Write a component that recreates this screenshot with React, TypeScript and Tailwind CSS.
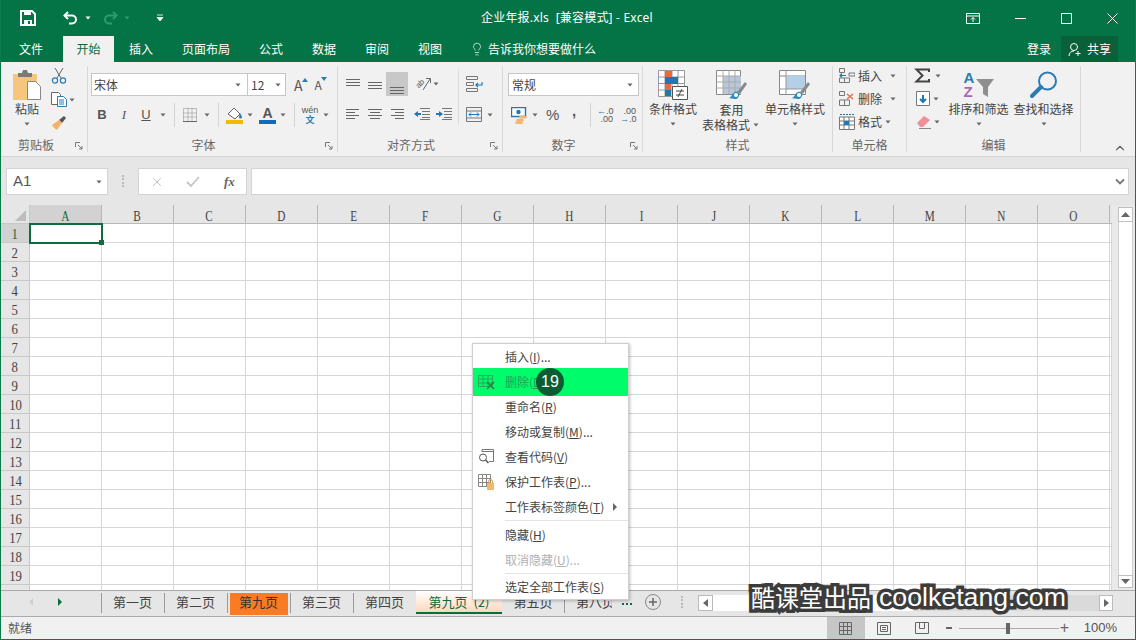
import { ChevronUp, Lightbulb, X } from 'lucide-react'
import type { ReactNode } from 'react'

const COLS = ['A', 'B', 'C', 'D', 'E', 'F', 'G', 'H', 'I', 'J', 'K', 'L', 'M', 'N', 'O']
const ROWS = Array.from({ length: 20 }, (_, i) => i + 1)

function Caret({ className = '', color = '#666' }: { className?: string; color?: string }) {
  return (
    <svg width="10" height="6" viewBox="0 0 10 6" className={`shrink-0 ${className}`}>
      <path d="M2.5 1.5h5L5 4.5z" fill={color} />
    </svg>
  )
}

function Launcher() {
  return (
    <svg width="8" height="8" viewBox="0 0 8 8" className="absolute right-[4px] bottom-[2px]">
      <path d="M.5 5V.5H5M3 3l4 4M7 4v3H4" fill="none" stroke="#777" strokeWidth="1" />
    </svg>
  )
}

function Group({ w, label, launcher, children }: { w: string; label: string; launcher?: boolean; children: ReactNode }) {
  return (
    <div className={`${w} relative shrink-0 my-[4px] border-r border-[#d8d8d8] flex flex-col`}>
      <div className="h-[71px] relative">{children}</div>
      <div className={`h-[15px] flex items-center justify-center text-[12px] text-[#666] ${launcher ? 'pr-[18px]' : ''}`}>{label}</div>
      {launcher && <Launcher />}
    </div>
  )
}

function Sep() {
  return <div className="w-px h-[24px] bg-[#d4d4d4] shrink-0" />
}

function Lines({ ys, x1s, x2s, color = '#666' }: { ys: number[]; x1s: number[]; x2s: number[]; color?: string }) {
  return (
    <svg width="16" height="14" viewBox="0 0 16 14">
      {ys.map((y, i) => (
        <path key={y} d={`M${x1s[i]} ${y + 0.5}H${x2s[i]}`} stroke={color} strokeWidth="1" />
      ))}
    </svg>
  )
}

function Big({ w, icon, text, caret = true }: { w: string; icon: ReactNode; text: ReactNode; caret?: boolean }) {
  return (
    <div className={`${w} flex flex-col items-center pt-[4px] shrink-0`}>
      <div className="h-[30px] flex items-center justify-center">{icon}</div>
      <div className="mt-[1px] text-[12px] leading-[15px] text-[#444] whitespace-nowrap">{text}</div>
      {caret && <Caret className="mt-[5px]" />}
    </div>
  )
}

function BrushOverlay() {
  return (
    <g>
      <path d="M20 29c-4 0-7-1-7-1 3-1 3-5 6-6 3-1 5 2 4 4-1 2-2 3-3 3z" fill="#2e8bc0" />
      <path d="M21 22l8-10 2 2-7 10z" fill="#8a8a8a" />
      <circle cx="20" cy="25" r="2" fill="#fff" />
    </g>
  )
}

function MenuItem({ label, accel, suffix = '', icon, disabled, arrow }: { label: string; accel: string; suffix?: string; icon?: ReactNode; disabled?: boolean; arrow?: boolean }) {
  return (
    <div className={`h-[25px] flex items-center text-[12px] ${disabled ? 'text-[#b0b0b0]' : 'text-[#444]'}`}>
      <div className="w-[32px] shrink-0 flex justify-start pl-[5px]">{icon}</div>
      <span>
        {label}(<span className="underline">{accel}</span>){suffix}
      </span>
      {arrow && (
        <svg width="6" height="8" viewBox="0 0 6 8" className="ml-[8px]">
          <path d="M1 0l4 4-4 4z" fill="#666" />
        </svg>
      )}
    </div>
  )
}

function Tab({ children, sep = true, className = 'w-[63px] justify-center' }: { children: ReactNode; sep?: boolean; className?: string }) {
  return (
    <div className={`h-[23px] mt-px relative shrink-0 flex items-center pb-[3px] whitespace-nowrap text-[13px] text-[#444] ${className}`}>
      {sep && <div className="absolute left-0 top-px w-px h-[20px] bg-[#9a9a9a]" />}
      {children}
    </div>
  )
}

export default function App() {
  return (
    <div className="w-[1136px] h-[640px] relative overflow-hidden flex flex-col bg-[#f1f1f1] border-x border-b border-[#0a7a4a] font-['Noto_Sans_CJK_SC','Noto_Sans',sans-serif]">
      {/* title bar */}
      <div className="h-[36px] -mx-px bg-[#047346] flex items-center text-white shrink-0">
        <div className="w-[481px] flex items-center shrink-0">
          <svg width="16" height="16" viewBox="0 0 16 16" className="ml-[20px]">
            <path d="M1 1h11l3 3v11H1z" fill="none" stroke="#fff" strokeWidth="2" />
            <path d="M4 1h7v4H4zM4 10h8v5H4z" fill="#fff" />
            <path d="M8 11h2v3H8z" fill="#047346" />
          </svg>
          <svg width="16" height="14" viewBox="0 0 16 14" className="ml-[27px]">
            <path d="M5 1L1.5 4.5 5 8" fill="none" stroke="#fff" strokeWidth="2" />
            <path d="M2 4.5h7a4 4 0 0 1 0 8H6" fill="none" stroke="#fff" strokeWidth="2" />
          </svg>
          <Caret className="ml-[4px]" color="#fff" />
          <svg width="16" height="14" viewBox="0 0 16 14" className="ml-[9px]">
            <path d="M11 1l3.500 3.500L11 8" fill="none" stroke="#2f9a70" strokeWidth="2" />
            <path d="M14 4.500H7a4 4 0 0 0 0 8h3" fill="none" stroke="#2f9a70" strokeWidth="2" />
          </svg>
          <Caret className="ml-[4px]" color="#2f9a70" />
          <svg width="8" height="8" viewBox="0 0 8 8" className="ml-[24px]">
            <path d="M1 1h6M1 3.500h6L4 7z" fill="#fff" stroke="#fff" strokeWidth=".8" />
          </svg>
        </div>
        <div className="text-[12px] tracking-[.2px] whitespace-pre font-['Noto_Sans','Noto_Sans_CJK_SC',sans-serif]">企业年报.xls  [兼容模式] - Excel</div>
        <div className="flex-1 flex items-center justify-end pr-[18px]">
          <svg width="14" height="11" viewBox="0 0 14 11">
            <path d="M.5 .5h13v10H.5zM.5 3h13" fill="none" stroke="#fff" />
            <path d="M7 9V4.500M5 6.500l2-2 2 2" fill="none" stroke="#fff" />
          </svg>
          <svg width="11" height="11" viewBox="0 0 11 11" className="ml-[35px]">
            <path d="M0 5.500h11" stroke="#fff" />
          </svg>
          <svg width="11" height="11" viewBox="0 0 11 11" className="ml-[35px]">
            <path d="M.5 .5h10v10H.5z" fill="none" stroke="#fff" />
          </svg>
          <svg width="11" height="11" viewBox="0 0 11 11" className="ml-[35px]">
            <path d="M.5 .5l10 10M10.500 .5l-10 10" fill="none" stroke="#fff" />
          </svg>
        </div>
      </div>

      {/* tabs */}
      <div className="h-[26px] -mx-px bg-[#047346] flex items-center text-[12px] text-white shrink-0">
        <span className="ml-[19px]">文件</span>
        <div className="ml-[20px] w-[51px] h-full bg-[#f1f1f1] text-[#0b6b3f] flex items-center justify-center">开始</div>
        <span className="ml-[15px]">插入</span>
        <span className="ml-[29px]">页面布局</span>
        <span className="ml-[29px]">公式</span>
        <span className="ml-[29px]">数据</span>
        <span className="ml-[29px]">审阅</span>
        <span className="ml-[29px]">视图</span>
        <Lightbulb size={14} strokeWidth={1.2} className="ml-[28px]" />
        <span className="ml-[4px]">告诉我你想要做什么</span>
        <div className="flex-1" />
        <span>登录</span>
        <div className="ml-[10px] mr-[18px] w-[57px] h-full bg-[#0a6038] flex items-center justify-center gap-[4px]">
          <svg width="15" height="15" viewBox="0 0 15 15">
            <circle cx="6" cy="5" r="3.500" fill="none" stroke="#fff" />
            <path d="M1 14c0-3 2-5 5-5M10 9v5M7.500 11.500h5" fill="none" stroke="#fff" />
          </svg>
          <span>共享</span>
        </div>
      </div>

      {/* ribbon */}
      <div className="h-[95px] flex shrink-0 border-b border-[#d4d4d4] pl-[2px] text-[#444]">
        <Group w="w-[85px]" label="剪贴板" launcher>
          <div className="flex h-full">
            <div className="w-[48px] flex flex-col items-center pt-[4px]">
              <svg width="28" height="30" viewBox="0 0 28 30">
                <path d="M0 4h24v26H0z" fill="#f6c67e" />
                <path d="M5 3h4l1-3h4l1 3h4v4H5z" fill="#7a7a7a" />
                <path d="M14.500 11.500h8l5 5v13h-13z" fill="#fff" stroke="#888" />
              </svg>
              <div className="text-[12px] leading-[15px] mt-[1px]">粘贴</div>
              <Caret className="mt-[5px]" />
            </div>
            <div className="flex flex-col pt-[2px]">
              <svg width="16" height="16" viewBox="0 0 16 16">
                <path d="M4 0l6 10M12 0L6 10" stroke="#666" fill="none" />
                <circle cx="4" cy="12.500" r="2.600" fill="none" stroke="#2b7cb3" strokeWidth="1.200" />
                <circle cx="12" cy="12.500" r="2.600" fill="none" stroke="#2b7cb3" strokeWidth="1.200" />
              </svg>
              <div className="flex items-center mt-[8px]">
                <svg width="16" height="15" viewBox="0 0 16 15">
                  <path d="M.5 .5h7l2 2v10h-9z" fill="#fff" stroke="#666" />
                  <path d="M6.500 4.500h6l3 3v7h-9z" fill="#fff" stroke="#2b7cb3" />
                  <path d="M8 8h5M8 10h5M8 12h5" stroke="#2b7cb3" />
                </svg>
                <Caret />
              </div>
              <svg width="16" height="15" viewBox="0 0 16 15" className="mt-[8px]">
                <path d="M8 5l5-4 2 2-4 5z" fill="#555" />
                <path d="M1 10l7-5 3 3-5 7c-2-1-4-3-5-5z" fill="#f4b26a" />
              </svg>
            </div>
          </div>
        </Group>

        <Group w="w-[250px]" label="字体" launcher>
          <div className="flex items-center ml-[3px] mt-[7px]">
            <div className="w-[157px] h-[23px] bg-white border border-[#c6c6c6] flex items-center justify-between text-[12px] pl-[2px] pr-[4px]">
              宋体
              <Caret />
            </div>
            <div className="w-[39px] h-[23px] -ml-px bg-white border border-[#c6c6c6] flex items-center justify-between text-[12px] pl-[3px] pr-[2px]">
              12
              <Caret />
            </div>
            <div className="ml-[8px] text-[14px] leading-none relative text-[#555]">
              A
              <svg width="6" height="4" viewBox="0 0 6 4" className="absolute -right-[5px] top-0">
                <path d="M0 4l3-4 3 4z" fill="#2b7cb3" />
              </svg>
            </div>
            <div className="ml-[12px] text-[12px] leading-none relative text-[#555]">
              A
              <svg width="6" height="4" viewBox="0 0 6 4" className="absolute -right-[5px] -top-[2px]">
                <path d="M0 0l3 4 3-4z" fill="#2b7cb3" />
              </svg>
            </div>
          </div>
          <div className="flex items-center ml-[3px] mt-[9px] h-[20px] text-[13px] text-[#555] font-['Liberation_Sans',sans-serif]">
            <div className="w-[22px] text-center font-bold">B</div>
            <div className="w-[22px] text-center italic font-['Liberation_Serif',serif]">I</div>
            <div className="w-[22px] text-center underline">U</div>
            <Caret className="ml-[1px]" />
            <div className="ml-[6px]"><Sep /></div>
            <svg width="14" height="14" viewBox="0 0 14 14" className="ml-[8px]">
              <path d="M.5 .5h13v13H.5zM.5 5h13M.5 9h13M5 .5v13M9 .5v13" fill="none" stroke="#888" strokeDasharray="1 1" />
              <path d="M0 13.500h14" stroke="#666" />
            </svg>
            <Caret className="ml-[5px]" />
            <div className="ml-[6px]"><Sep /></div>
            <svg width="18" height="17" viewBox="0 0 18 17" className="ml-[7px]">
              <path d="M2 7l6-6 6 6-5 5z" fill="#fff" stroke="#666" />
              <path d="M14 6c1 2 2 3 2 4a1.500 1.500 0 0 1-3 0z" fill="#2b7cb3" />
              <path d="M0 13h17v4H0z" fill="#f5b800" />
            </svg>
            <Caret className="ml-[1px]" />
            <div className="ml-[4px] w-[17px] flex flex-col items-center">
              <span className="text-[14px] leading-[13px] font-bold text-[#555]">A</span>
              <div className="w-[17px] h-[4px] bg-[#0f6cbd]" />
            </div>
            <Caret className="ml-[2px]" />
            <div className="ml-[6px]"><Sep /></div>
            <div className="ml-[6px] w-[18px] flex flex-col items-center text-[9px] leading-[9px] text-[#555]">
              wén
              <span className="text-[#2b7cb3] font-bold font-['Noto_Sans_CJK_SC',sans-serif]">文</span>
            </div>
            <Caret className="ml-[2px]" />
          </div>
        </Group>

        <Group w="w-[165px]" label="对齐方式" launcher>
          <div className="flex h-full">
            <div className="w-[121px] shrink-0 border-r border-[#dcdcdc] h-[56px] mt-[3px]">
              <div className="flex items-center ml-[4px] h-[24px] mt-[3px]">
                <div className="w-[22px] flex justify-center"><Lines ys={[2, 5, 8]} x1s={[1, 1, 1]} x2s={[15, 15, 15]} /></div>
                <div className="w-[22px] flex justify-center"><Lines ys={[5, 8, 11]} x1s={[1, 1, 1]} x2s={[15, 15, 15]} /></div>
                <div className="w-[22px] h-[24px] bg-[#c8c8c8] flex items-end justify-center"><Lines ys={[5, 8, 11]} x1s={[1, 1, 1]} x2s={[15, 15, 15]} /></div>
                <div className="w-[23px] flex items-center justify-end">
                  <span className="inline-block -rotate-45 text-[8px] leading-none text-[#555] font-['Liberation_Sans',sans-serif]">ab</span>
                  <svg width="8" height="14" viewBox="0 0 8 14" className="-ml-[2px]">
                    <path d="M0 13L7 2M3 1.500h4.500V6" fill="none" stroke="#666" />
                  </svg>
                </div>
                <Caret />
              </div>
              <div className="flex items-center ml-[4px] h-[20px] mt-[8px]">
                <div className="w-[22px] flex justify-center"><Lines ys={[2, 5, 8, 11]} x1s={[1, 1, 1, 1]} x2s={[14, 10, 14, 10]} /></div>
                <div className="w-[22px] flex justify-center"><Lines ys={[2, 5, 8, 11]} x1s={[1, 3, 1, 3]} x2s={[15, 13, 15, 13]} /></div>
                <div className="w-[22px] flex justify-center"><Lines ys={[2, 5, 8, 11]} x1s={[2, 6, 2, 6]} x2s={[15, 15, 15, 15]} /></div>
                <div className="ml-[3px] w-[22px] flex justify-center">
                  <svg width="16" height="12" viewBox="0 0 16 12">
                    <path d="M6 .5h10M8 3.500h8M8 6.500h8M8 9.500h8M6 11.500h10" stroke="#777" fill="none" />
                    <path d="M0 6l4-3v2h3v2H4v2z" fill="#1f77b4" />
                  </svg>
                </div>
                <div className="w-[22px] flex justify-center">
                  <svg width="16" height="12" viewBox="0 0 16 12">
                    <path d="M6 .5h10M8 3.500h8M8 6.500h8M8 9.500h8M6 11.500h10" stroke="#777" fill="none" />
                    <path d="M7 6L3 3v2H0v2h3v2z" fill="#1f77b4" />
                  </svg>
                </div>
              </div>
            </div>
            <div className="pl-[7px] pt-[10px]">
              <svg width="17" height="16" viewBox="0 0 17 16">
                <path d="M.5 .5h11v3H.5zM.5 6.500h7v3h-7zM.5 12.500h11v3H.5z" fill="none" stroke="#777" />
                <path d="M16 6v3h-6M12 7l-2 2 2 2" fill="none" stroke="#1f77b4" strokeWidth="1.200" />
              </svg>
              <div className="flex items-center mt-[15px]">
                <svg width="16" height="15" viewBox="0 0 16 15">
                  <path d="M.5 .5h15v14H.5zM.5 4h15M.5 11h15" fill="none" stroke="#777" />
                  <path d="M3 7.500h10M5 5.500l-2 2 2 2M11 5.500l2 2-2 2" fill="none" stroke="#1f77b4" />
                </svg>
                <Caret className="ml-[3px]" />
              </div>
            </div>
          </div>
        </Group>

        <Group w="w-[140px]" label="数字" launcher>
          <div className="ml-[5px] mt-[7px] w-[131px] h-[23px] bg-white border border-[#c6c6c6] flex items-center justify-between text-[12px] pl-[3px] pr-[3px]">
            常规
            <Caret />
          </div>
          <div className="flex items-center ml-[8px] mt-[9px] h-[20px]">
            <svg width="18" height="17" viewBox="0 0 18 17">
              <path d="M.5 .5h14v9H.5z" fill="#fff" stroke="#1f77b4" strokeWidth="1.400" />
              <circle cx="7.500" cy="5" r="2.200" fill="#1f77b4" />
              <ellipse cx="12" cy="10" rx="4" ry="1.600" fill="#f3b766" />
              <ellipse cx="9" cy="13" rx="4" ry="1.600" fill="#f3b766" />
              <ellipse cx="8" cy="15.500" rx="4" ry="1.500" fill="#f3b766" />
            </svg>
            <Caret className="ml-[1px]" />
            <span className="ml-[6px] w-[15px] text-[15px] text-[#555] font-['Liberation_Sans',sans-serif]">%</span>
            <span className="w-[26px] -mt-[8px] text-center text-[15px] font-bold text-[#555] font-['Liberation_Sans',sans-serif]">,</span>
            <div className="ml-[3px]"><Sep /></div>
            <div className="ml-[6px] w-[16px] text-[9px] leading-[8px] text-[#555] font-['Liberation_Sans',sans-serif]">
              <div className="whitespace-nowrap"><span className="text-[#1f77b4] font-bold">←</span>.0</div>
              <div className="text-right">.00</div>
            </div>
            <div className="ml-[7px] w-[16px] text-[9px] leading-[8px] text-[#555] font-['Liberation_Sans',sans-serif]">
              <div className="text-right">.00</div>
              <div className="whitespace-nowrap"><span className="text-[#1f77b4] font-bold">→</span>.0</div>
            </div>
          </div>
        </Group>

        <Group w="w-[190px]" label="样式">
          <div className="flex pl-[3px] h-full">
            <Big
              w="w-[54px]"
              text="条件格式"
              icon={
                <svg width="30" height="30" viewBox="0 0 30 30">
                  <path d="M.5 .5h26v26H.5zM.5 7h26M.5 13.500h26M.5 20h26M7 .5v26M14 .5v26M20 .5v26" fill="#fff" stroke="#999" />
                  <path d="M7 1h7v6H7zM7 14h6v6H7z" fill="#e8693f" />
                  <path d="M7 7h13v7H7zM7 20h6v6H7z" fill="#1f77b4" />
                  <path d="M14.500 16.500h15v13h-15z" fill="#fff" stroke="#555" />
                  <path d="M18 21h8M18 25h8M24 19l-4 8" stroke="#444" fill="none" />
                </svg>
              }
            />
            <Big
              w="w-[63px]"
              caret={false}
              text={
                <div className="flex flex-col items-center mt-[1px]">
                  <span>套用</span>
                  <span className="flex items-center">
                    表格格式
                    <Caret className="ml-[1px]" />
                  </span>
                </div>
              }
              icon={
                <svg width="32" height="30" viewBox="0 0 32 30">
                  <path d="M.5 .5h24v24H.5z" fill="#fff" stroke="#888" />
                  <path d="M7 6h18v18H7z" fill="#b8c7d9" />
                  <path d="M.5 6h24M.5 12h24M.5 18h24M7 .5v24M13 .5v24M19 .5v24" stroke="#aaa" fill="none" />
                  <BrushOverlay />
                </svg>
              }
            />
            <Big
              w="w-[64px]"
              text="单元格样式"
              icon={
                <svg width="32" height="30" viewBox="0 0 32 30">
                  <path d="M.5 .5h26v24H.5zM.5 6h26" fill="#fff" stroke="#888" />
                  <path d="M7 6h19v13H7z" fill="#b4cfe8" />
                  <path d="M7 .5v24M.5 19h26" stroke="#999" fill="none" />
                  <BrushOverlay />
                </svg>
              }
            />
          </div>
        </Group>

        <Group w="w-[74px]" label="单元格">
          <div className="flex flex-col -mt-[2px] text-[12px]">
            <div className="h-[23px] flex items-center pl-[6px]">
              <svg width="16" height="15" viewBox="0 0 16 15">
                <path d="M.5 .5h5v4h-5zM.5 10h5v4.500h-5zM5.500 10h5v4.500h-5zM10 5h6v3h-6z" fill="none" stroke="#777" />
                <path d="M1 7.500h6M3 5.500l-2 2 2 2" fill="none" stroke="#1f77b4" strokeWidth="1.200" />
              </svg>
              <span className="ml-[3px]">插入</span>
              <Caret className="ml-[6px]" />
            </div>
            <div className="h-[23px] flex items-center pl-[6px]">
              <svg width="16" height="15" viewBox="0 0 16 15">
                <path d="M.5 .5h5v4h-5zM.5 9h5v5.500h-5zM5.500 9h5v5.500h-5z" fill="none" stroke="#777" />
                <path d="M8 3l6 5M14 3L8 8" stroke="#e8693f" strokeWidth="1.400" />
              </svg>
              <span className="ml-[3px]">删除</span>
              <Caret className="ml-[6px]" />
            </div>
            <div className="h-[23px] flex items-center pl-[6px]">
              <svg width="16" height="16" viewBox="0 0 16 16">
                <path d="M.5 3h15v12.500H.5zM.5 7h15M.5 11h15M5 3v12.500M10 3v12.500" fill="#fff" stroke="#777" />
                <path d="M5 7h5v4H5z" fill="#1f77b4" />
                <path d="M1 .5h14" stroke="#1f77b4" strokeDasharray="2 1" />
              </svg>
              <span className="ml-[3px]">格式</span>
              <Caret className="ml-px" />
            </div>
          </div>
        </Group>

        <Group w="w-[174px]" label="编辑">
          <div className="flex h-full">
            <div className="w-[39px] shrink-0 flex flex-col -mt-[2px]">
              <div className="h-[23px] flex items-center pl-[7px]">
                <svg width="16" height="15" viewBox="0 0 16 15">
                  <path d="M15 4V1.500H2.500L8.500 7.500l-6 6H15V11" fill="none" stroke="#444" strokeWidth="2" />
                </svg>
                <Caret className="ml-[3px]" />
              </div>
              <div className="h-[23px] flex items-center pl-[9px]">
                <svg width="14" height="15" viewBox="0 0 14 15">
                  <path d="M.5 .5h13v14H.5z" fill="#fff" stroke="#777" />
                  <path d="M7 4v7M4 8l3 3 3-3" fill="none" stroke="#1f77b4" strokeWidth="2" />
                </svg>
                <Caret className="ml-px" />
              </div>
              <div className="h-[23px] flex items-center pl-[9px]">
                <svg width="16" height="14" viewBox="0 0 16 14">
                  <path d="M1 8l7-7 6 4-7 7H4z" fill="#ef8f97" />
                  <path d="M3 13.500h12" stroke="#888" />
                </svg>
                <Caret />
              </div>
            </div>
            <Big
              w="w-[65px]"
              text="排序和筛选"
              icon={
                <div className="flex items-start w-[30px]">
                  <div className="w-[12px] flex flex-col text-[15px] leading-[14px] font-bold font-['Liberation_Sans',sans-serif]">
                    <span className="text-[#2b7cb3]">A</span>
                    <span className="text-[#a866b8]">Z</span>
                  </div>
                  <svg width="18" height="20" viewBox="0 0 18 20" className="mt-[7px]">
                    <path d="M0 1h18l-6 8v10l-5-3V9z" fill="#8f8f8f" />
                  </svg>
                </div>
              }
            />
            <Big
              w="w-[65px]"
              text="查找和选择"
              icon={
                <svg width="28" height="28" viewBox="0 0 28 28">
                  <circle cx="17.500" cy="10" r="8.500" fill="none" stroke="#2b7cb3" strokeWidth="2" />
                  <path d="M11 16L2 25" stroke="#2b7cb3" strokeWidth="4" strokeLinecap="round" />
                </svg>
              }
            />
          </div>
        </Group>

        <div className="flex-1 flex items-end justify-end pr-[8px] pb-[1px]">
          <ChevronUp size={14} strokeWidth={2} className="text-[#666]" />
        </div>
      </div>

      {/* formula bar */}
      <div className="h-[48px] bg-[#e6e6e6] flex items-start pt-[11px] pl-[5px] shrink-0">
        <div className="w-[102px] h-[27px] bg-white border border-[#d4d4d4] flex items-center justify-between pl-[6px] pr-[3px] text-[15px] text-[#555] font-['Liberation_Sans',sans-serif]">
          A1
          <Caret />
        </div>
        <div className="ml-[14px] mt-[7px] w-[2px] h-[12px] border-l-2 border-dotted border-[#bbb]" />
        <div className="ml-[14px] w-[109px] h-[27px] bg-white border border-[#d4d4d4] flex items-center text-[#bbb]">
          <X size={14} strokeWidth={1.6} className="ml-[11px]" />
          <svg width="14" height="12" viewBox="0 0 14 12" className="ml-[22px]">
            <path d="M1 6l4 4 8-9" fill="none" stroke="#c4c4c4" strokeWidth="1.800" />
          </svg>
          <span className="ml-[24px] text-[13px] italic font-bold text-[#666] font-['Liberation_Serif',serif]">fx</span>
        </div>
        <div className="ml-[4px] w-[878px] h-[27px] bg-white border border-[#d4d4d4] flex items-center justify-end pr-[2px]">
          <svg width="12" height="8" viewBox="0 0 12 8">
            <path d="M2 1.500l4 4 4-4" fill="none" stroke="#777" strokeWidth="1.800" />
          </svg>
        </div>
      </div>

      {/* sheet */}
      <div className="h-[385px] flex bg-white shrink-0 overflow-hidden">
        <div className="grid grid-cols-[29px_repeat(15,72px)_2px] grid-rows-[19px_repeat(20,19px)] h-[385px] overflow-hidden font-['Liberation_Serif',serif] text-[15px] text-[#444]">
          <div className="bg-[#e6e6e6] border-r border-b border-[#c8c8c8] flex items-end justify-end pr-[3px] pb-[2px]">
            <svg width="11" height="11" viewBox="0 0 11 11">
              <path d="M11 0v11H0z" fill="#bdbdbd" />
            </svg>
          </div>
          {COLS.map((c) => (
            <div
              key={c}
              className={`border-r border-b border-[#b8b8b8] flex items-center justify-center pt-[4px] ${c === 'A' ? 'bg-[#d2d2d2] text-[#0e6b3f]' : 'bg-[#e6e6e6]'}`}
            >
              <span className="inline-block scale-x-[.75]">{c}</span>
            </div>
          ))}
          <div className="bg-[#e6e6e6] border-b border-[#b8b8b8]" />
          {ROWS.map((r) => (
            <div key={r} className="contents">
              <div className={`border-r border-b border-[#c8c8c8] flex items-center justify-center pt-[2px] ${r === 1 ? 'bg-[#d2d2d2] text-[#0e6b3f]' : 'bg-[#e6e6e6]'}`}>
                {r < 20 && <span className="inline-block scale-x-[.85]">{r}</span>}
              </div>
              {COLS.map((c) => (
                <div key={c} className="relative border-r border-b border-[#d6d6d6]">
                  {r === 1 && c === 'A' && (
                    <div className="absolute -left-px -top-px w-[74px] h-[21px] border-2 border-[#0f6b41] z-10">
                      <div className="absolute -right-[3px] -bottom-[3px] w-[5px] h-[5px] bg-[#0f6b41]" />
                    </div>
                  )}
                </div>
              ))}
              <div className="border-r border-b border-[#d6d6d6]" />
            </div>
          ))}
        </div>
        <div className="flex-1 bg-[#e9e9e9] flex flex-col items-center pl-[4px] pt-[2px]">
          <div className="w-[15px] h-[15px] bg-white border border-[#c0c0c0] flex items-center justify-center">
            <svg width="9" height="5" viewBox="0 0 9 5">
              <path d="M0 5l4.500-5L9 5z" fill="#666" />
            </svg>
          </div>
          <div className="w-[15px] h-[353px] bg-white border-x border-[#d0d0d0]" />
          <div className="w-[15px] h-[13px] bg-white border border-[#c0c0c0] flex items-center justify-center">
            <svg width="9" height="5" viewBox="0 0 9 5">
              <path d="M0 0l4.500 5L9 0z" fill="#666" />
            </svg>
          </div>
        </div>
      </div>

      {/* sheet tabs */}
      <div className="h-[27px] bg-[#e6e6e6] border-y border-[#ababab] flex items-start shrink-0">
        <div className="w-[100px] shrink-0 flex items-center h-[22px]">
          <svg width="6" height="8" viewBox="0 0 6 8" className="ml-[27px]">
            <path d="M5 0L1 4l4 4z" fill="#cfcfcf" />
          </svg>
          <svg width="6" height="8" viewBox="0 0 6 8" className="ml-[23px]">
            <path d="M1 0l4 4-4 4z" fill="#0e6b3f" />
          </svg>
        </div>
        <Tab>第一页</Tab>
        <Tab>第二页</Tab>
        <Tab>
          <div className="w-[58px] h-[22px] -mb-[3px] pb-[3px] bg-[#fb7b24] text-[#333] flex items-center justify-center">第九页</div>
        </Tab>
        <Tab>第三页</Tab>
        <Tab>第四页</Tab>
        <div className="w-[86px] h-[23px] shrink-0 bg-gradient-to-b from-white to-[#fcd8bd] border-b-2 border-[#0e6b3f] flex items-center justify-center text-[13px] text-[#0e6b3f] whitespace-pre">
          第九页  (2)
        </div>
        <Tab className="w-[62px] justify-center" sep={false}>第五页</Tab>
        <Tab className="w-[48px] justify-start pl-[12px] overflow-hidden">第八页</Tab>
        <div className="ml-[10px] mt-[12px] flex gap-[2px]">
          <div className="w-[2px] h-[2px] bg-[#0e6b3f]" />
          <div className="w-[2px] h-[2px] bg-[#0e6b3f]" />
          <div className="w-[2px] h-[2px] bg-[#0e6b3f]" />
        </div>
        <svg width="16" height="16" viewBox="0 0 16 16" className="ml-[13px] mt-[3px]">
          <circle cx="8" cy="8" r="7.500" fill="none" stroke="#888" />
          <path d="M8 4v8M4 8h8" stroke="#666" strokeWidth="1.500" />
        </svg>
        <div className="ml-[20px] mt-[5px] w-[2px] h-[12px] border-l-2 border-dotted border-[#bbb]" />
        <div className="ml-[15px] mt-[4px] w-[415px] h-[16px] bg-[#dadada] flex items-center justify-between">
          <div className="flex h-full">
            <div className="w-[15px] h-full bg-white border border-[#bbb] flex items-center justify-center">
              <svg width="5" height="8" viewBox="0 0 5 8">
                <path d="M5 0L0 4l5 4z" fill="#666" />
              </svg>
            </div>
            <div className="w-[200px] h-full bg-white" />
          </div>
          <div className="w-[14px] h-full bg-white border border-[#bbb] flex items-center justify-center">
            <svg width="5" height="8" viewBox="0 0 5 8">
              <path d="M0 0l5 4-5 4z" fill="#666" />
            </svg>
          </div>
        </div>
      </div>

      {/* status bar */}
      <div className="flex-1 flex items-center text-[12px] text-[#555] relative">
        <span className="ml-[7px]">就绪</span>
        <div className="flex-1" />
        <div className="w-[38px] h-full bg-[#c6c6c6] flex items-center justify-center">
          <svg width="13" height="13" viewBox="0 0 13 13">
            <path d="M.5 .5h12v12H.5zM.5 4.500h12M.5 8.500h12M4.500 .5v12M8.500 .5v12" fill="none" stroke="#666" />
          </svg>
        </div>
        <svg width="14" height="13" viewBox="0 0 14 13" className="ml-[12px]">
          <path d="M.5 .5h13v12H.5zM3.500 3.500h7v6h-7zM5 5.500h4M5 7.500h4" fill="none" stroke="#666" />
        </svg>
        <svg width="14" height="12" viewBox="0 0 14 12" className="ml-[24px]">
          <path d="M.5 .5h13v11H.5zM4.500 .5v6h5v-6" fill="none" stroke="#666" />
        </svg>
        <div className="ml-[17px] w-[6px] h-[2px] bg-[#666]" />
        <div className="ml-[7px] w-[100px] h-px bg-[#aaa] relative">
          <div className="absolute left-[47px] -top-[5px] w-[4px] h-[11px] bg-[#666]" />
        </div>
        <span className="ml-[1px] text-[16px] text-[#666] leading-none w-[9px] font-['Liberation_Sans',sans-serif]">+</span>
        <span className="ml-[15px] mr-[18px] text-[13px] text-[#555] font-['Liberation_Sans',sans-serif]">100%</span>
      </div>

      {/* sheet tab context menu */}
      <div className="absolute left-[471px] top-[343px] w-[157px] h-[257px] bg-white border border-[#cfcfcf] shadow-[1px_1px_3px_rgba(0,0,0,0.25)] z-20">
        <MenuItem label="插入" accel="I" suffix="..." />
        <div className="h-[28px] -mt-px -mb-[2px] bg-[#00fb6b] flex items-center text-[12px] text-[#22a552] relative">
          <div className="w-[32px] shrink-0 flex justify-start pl-[5px]">
            <svg width="17" height="15" viewBox="0 0 17 15">
              <path d="M.5 .5h14v11H.5zM.5 4h14M.5 8h14M5 .5v11M10 .5v11" fill="none" stroke="#2aa860" />
              <path d="M9 7l7 7M16 7l-7 7" stroke="#138a3e" strokeWidth="1.600" />
            </svg>
          </div>
          <span>
            删除(<span className="underline">D</span>)
          </span>
          <div className="absolute left-[63px] top-0 w-[28px] h-[28px] rounded-full bg-[#0a5c32] text-white text-[16px] flex items-center justify-center font-['Liberation_Sans',sans-serif]">
            19
          </div>
        </div>
        <MenuItem label="重命名" accel="R" />
        <MenuItem label="移动或复制" accel="M" suffix="..." />
        <MenuItem
          label="查看代码"
          accel="V"
          icon={
            <svg width="16" height="15" viewBox="0 0 16 15">
              <path d="M4 3V.5h11.500v12H11M4 2.500h11.500" fill="none" stroke="#777" />
              <circle cx="5" cy="8.500" r="3.500" fill="#fff" stroke="#555" />
              <path d="M7.500 11l3 3" stroke="#555" strokeWidth="1.500" />
            </svg>
          }
        />
        <MenuItem
          label="保护工作表"
          accel="P"
          suffix="..."
          icon={
            <svg width="17" height="16" viewBox="0 0 17 16">
              <path d="M.5 .5h12v12H.5zM.5 4.500h12M.5 8.500h12M4.500 .5v12M8.500 .5v12" fill="#fff" stroke="#888" />
              <path d="M9 9h7v7H9z" fill="#f3b766" />
              <path d="M10.500 9V7.500a2 2 0 0 1 4 0V9" fill="none" stroke="#d99a4a" />
            </svg>
          }
        />
        <MenuItem label="工作表标签颜色" accel="T" arrow />
        <div className="h-[3px] flex items-center pl-[32px]">
          <div className="flex-1 h-px bg-[#e4e4e4]" />
        </div>
        <MenuItem label="隐藏" accel="H" />
        <MenuItem label="取消隐藏" accel="U" suffix="..." disabled />
        <div className="h-[2px] flex items-center pl-[32px]">
          <div className="flex-1 h-px bg-[#e4e4e4]" />
        </div>
        <MenuItem label="选定全部工作表" accel="S" />
      </div>

      {/* watermark */}
      <div className="absolute left-[750px] top-[581px] z-30 flex items-center whitespace-nowrap text-white [-webkit-text-stroke:7px_#3c3c3c] [paint-order:stroke_fill] font-['Noto_Sans_CJK_SC',sans-serif]">
        <span className="text-[24px] leading-[32px] [paint-order:stroke_fill]">酷课堂出品</span>
        <span className="ml-[8px] text-[26.7px] leading-[32px] [paint-order:stroke_fill] font-['Liberation_Sans',sans-serif]">coolketang.com</span>
      </div>
    </div>
  )
}
